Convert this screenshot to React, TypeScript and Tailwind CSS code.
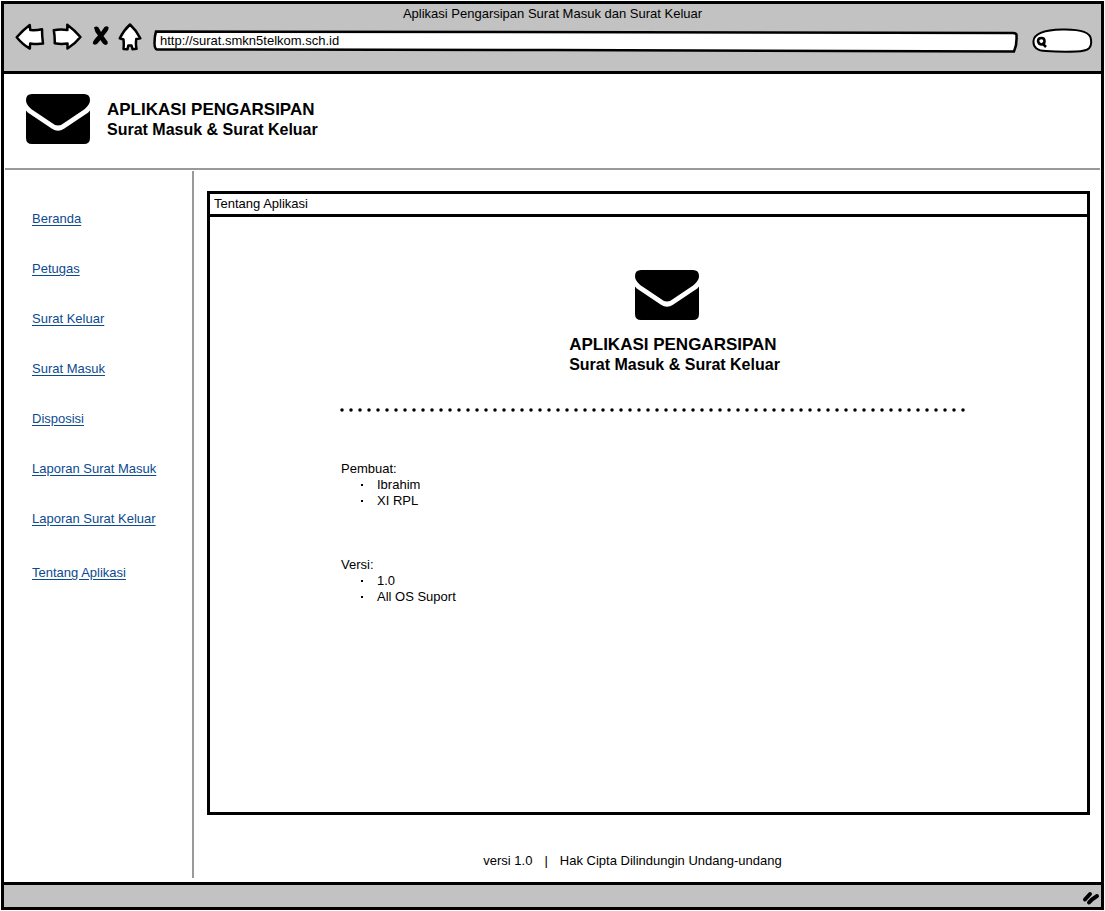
const links = [
  "Beranda",
  "Petugas",
  "Surat Keluar",
  "Surat Masuk",
  "Disposisi",
  "Laporan Surat Masuk",
  "Laporan Surat Keluar",
];

const details = [
  { label: "Pembuat:", items: ["Ibrahim", "XI RPL"] },
  { label: "Versi:", items: ["1.0", "All OS Suport"] },
];

function Envelope() {
  return (
    <svg viewBox="0 0 64 50" className="h-[50px] w-16 shrink-0" aria-hidden="true">
      <path d="M6 0H58Q64 0 64 6C64 10 61 13.5 57 16.2L38 29Q32 34 26 29L7 16.2C3 13.5 0 10 0 6Q0 0 6 0Z" />
      <path d="M0 16.5Q1.5 18.5 4 20L26 34.8Q32 38.8 38 34.8L60 20Q62.5 18.5 64 16.5V44Q64 50 58 50H6Q0 50 0 44Z" />
    </svg>
  );
}

function Brand() {
  return (
    <div className="font-bold">
      <p className="text-[17px] leading-5">APLIKASI PENGARSIPAN</p>
      <p className="text-base leading-5">Surat Masuk &amp; Surat Keluar</p>
    </div>
  );
}

function Toolbar() {
  return (
    <header className="border-b-[3px] border-black bg-[#c2c2c2] pb-[18px]">
      <h1 className="text-center leading-[19px]">Aplikasi Pengarsipan Surat Masuk dan Surat Keluar</h1>
      <div className="flex items-end gap-[7px] pl-[11px] pr-[7px]">
        <button type="button" aria-label="Kembali">
          <svg viewBox="15 23 30 30" className="block h-[30px] w-[30px] fill-white stroke-black stroke-[2.5] [stroke-linejoin:round]">
            <path d="M16.7 37.3Q23 30 29.7 25L30.3 30Q36 30.5 42 29.2Q42 36 43 43.6Q37 44.6 30.2 43.4L29.8 48.6Q22.5 44.5 16.7 37.3Z" />
          </svg>
        </button>
        <button type="button" aria-label="Maju">
          <svg viewBox="52 23 30 30" className="block h-[30px] w-[30px] fill-white stroke-black stroke-[2.5] [stroke-linejoin:round]">
            <path d="M53.8 30.2Q60 29 67.4 30L67.3 24.7Q74.5 30 80.4 37Q75 44 67.5 48.5L67.5 43.6Q61 44.6 54.7 43.3Q55 37 53.8 30.2Z" />
          </svg>
        </button>
        <button type="button" aria-label="Berhenti">
          <svg viewBox="90 23 22 30" className="block h-[30px] w-[22px] fill-black">
            <path d="M95 27.5Q97.5 25.5 99.5 27.5L102 32L105.5 27Q108 25.5 109.7 27.5Q109.8 30 107 33L104.5 36L108.5 41.5Q109.5 44.5 106.5 45Q104 44.5 101.5 40L98 44Q95 45.5 93.8 43.5Q93.5 41 99 35.5Q95.5 31.5 95 27.5Z" />
          </svg>
        </button>
        <button type="button" aria-label="Halaman awal">
          <svg viewBox="118 23 24 30" className="block h-[30px] w-6 fill-white stroke-black stroke-[2.5] [stroke-linejoin:round]">
            <path d="M130 24.5Q136 30 140.3 38.3L136.3 39Q135.5 44 136.5 48.8L132.5 49.2L131.5 45.5H128.3L127.5 49.2L123.5 49Q124 44 123.5 39.5L119.8 38.3Q124 30 130 24.5Z" />
          </svg>
        </button>
        <div className="relative ml-1 h-6 min-w-0 flex-1">
          <svg viewBox="0 0 864 24" preserveAspectRatio="none" className="absolute inset-0 h-full w-full fill-white stroke-black stroke-[2.5]" aria-hidden="true">
            <path
              vectorEffect="non-scaling-stroke"
              d="M3 2.5Q430 2 859 4Q863 4 862.5 7Q863 16 860 22.5Q600 22 400 21Q200 20 4 20.5Q1.5 20 1.5 14Q1.5 7 3 2.5Z"
            />
          </svg>
          <input
            type="text"
            aria-label="Alamat"
            defaultValue="http://surat.smkn5telkom.sch.id"
            className="relative block h-[22px] w-full bg-transparent pl-[7px] pr-2 outline-none"
          />
        </div>
        <div className="relative ml-[7px] h-[26px] w-[62px] shrink-0">
          <svg viewBox="1032 28 62 26" className="absolute inset-0 h-full w-full fill-white stroke-black stroke-2" aria-hidden="true">
            <path d="M1033.5 42C1034 35 1042 31 1062 30.5C1082 30 1091 34 1091 41C1092 48 1090 52 1076 52.5Q1060 53 1046 52C1037 52 1033 48 1033.5 42Z" />
            <path className="stroke-[2.5]" d="M1041.5 39Q1038 39 1038 42Q1038.5 45.5 1041.8 45.5Q1044.8 45 1044.5 42Q1044.5 39 1041.5 39ZM1042 44L1046 48" />
          </svg>
          <input type="text" aria-label="Cari" className="relative block h-full w-full bg-transparent pl-4 pr-2 outline-none" />
        </div>
      </div>
    </header>
  );
}

export default function App() {
  return (
    <div className="flex min-h-screen bg-white p-px font-['Liberation_Sans',sans-serif] text-[13px] leading-4 text-black">
      <div className="flex flex-1 flex-col border-[3px] border-black">
        <Toolbar />
        <div className="mx-px flex items-center gap-[17px] border-b-2 border-[#999] pb-6 pl-[21px] pt-5">
          <Envelope />
          <div className="pt-0.5">
            <Brand />
          </div>
        </div>
        <div className="flex flex-1">
          <nav className="mb-1 mt-px w-[190px] shrink-0 border-r-2 border-[#999] pl-7 pt-10 text-[#0b4a8f]">
            <ul className="flex flex-col gap-[34px] underline underline-offset-2">
              {links.map((link) => (
                <li key={link}>
                  <a href="#">{link}</a>
                </li>
              ))}
              <li className="pt-1">
                <a href="#">Tentang Aplikasi</a>
              </li>
            </ul>
          </nav>
          <div className="flex flex-1 flex-col pl-[13px] pr-[11px] pt-[21px]">
            <main className="flex-1 border-[3px] border-black">
              <h2 className="border-b-[3px] border-black pb-0.5 pl-1 pt-0.5">Tentang Aplikasi</h2>
              <div className="pb-12 pl-[131px] pr-[121px] pt-[53px]">
                <div className="flex flex-col items-center pl-[26px]">
                  <Envelope />
                  <div className="pl-4 pt-[15px]">
                    <Brand />
                  </div>
                </div>
                <svg className="mt-[33px] block h-1 w-full overflow-visible" aria-hidden="true">
                  <line
                    x1="1"
                    y1="2"
                    x2="100%"
                    y2="2"
                    className="stroke-black stroke-[3.5] [stroke-dasharray:0_9] [stroke-linecap:round]"
                  />
                </svg>
                <div className="pt-px">
                  {details.map((group) => (
                    <section key={group.label} className="mt-12">
                      <h3>{group.label}</h3>
                      <ul>
                        {group.items.map((item) => (
                          <li key={item} className="flex items-center gap-3.5 pl-5">
                            <span className="h-0.5 w-0.5 bg-black" />
                            {item}
                          </li>
                        ))}
                      </ul>
                    </section>
                  ))}
                </div>
              </div>
            </main>
            <footer className="flex justify-center gap-3 pb-[13px] pr-8 pt-[38px]">
              <span>versi 1.0</span>
              <span>|</span>
              <span>Hak Cipta Dilindungin Undang-undang</span>
            </footer>
          </div>
        </div>
        <div className="flex h-[25px] items-end justify-end border-t-[3px] border-black bg-[#c2c2c2] pb-px pr-px">
          <svg viewBox="1082 890 18 16" className="h-4 w-[18px] fill-none stroke-black stroke-[4] [stroke-linecap:round]" aria-hidden="true">
            <path d="M1085 899.5L1090 894M1089 902.5Q1092 899 1097 896" />
          </svg>
        </div>
      </div>
    </div>
  );
}
